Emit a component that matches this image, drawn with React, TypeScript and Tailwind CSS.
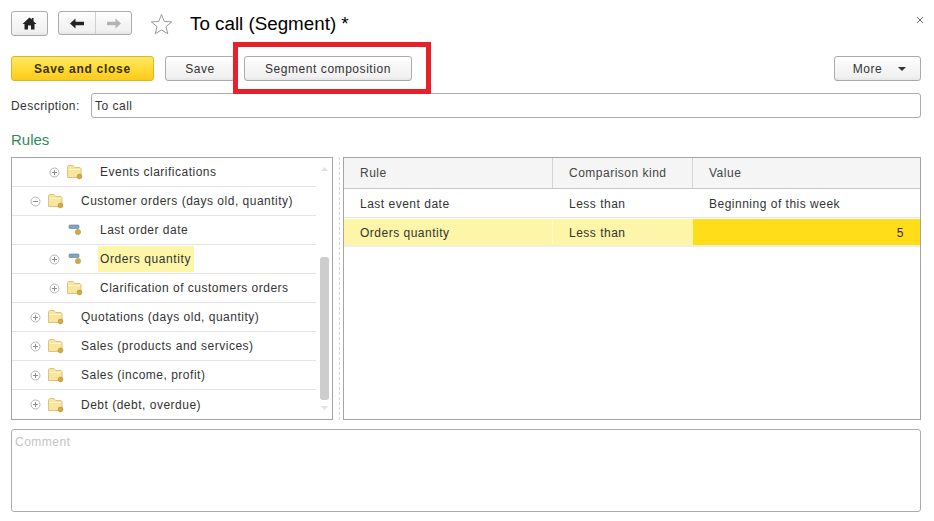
const Folder = () => (
    <svg width="16" height="16" viewBox="0 0 16 16" className="shrink-0">
        <path d="M0.5 13.5V2.5L1.5 1.5H6L7.5 3.5H13L14 4.5V13.5Z" fill="#f9e59c" stroke="#dcc47c" strokeWidth="1"/>
        <path d="M1.5 5.5H13" stroke="#fff6cf" strokeWidth="1"/>
        <circle cx="12.5" cy="12.5" r="2.4" fill="#d6aa48" stroke="#a98229" strokeWidth="0.5"/>
    </svg>
);

const Field = () => (
    <svg width="16" height="16" viewBox="0 0 16 16" className="shrink-0">
        <rect x="2" y="3" width="10" height="3.5" rx="1" fill="#7fa6bd" stroke="#5a7f96" strokeWidth="0.6"/>
        <circle cx="11" cy="10" r="2.6" fill="#d6aa48" stroke="#a98229" strokeWidth="0.5"/>
    </svg>
);

const Toggle = ({open}: {open?: boolean}) => (
    <svg width="11" height="11" viewBox="0 0 11 11" className="shrink-0">
        <circle cx="5.5" cy="5.5" r="4.5" fill="#fff" stroke="#b4b4b4" strokeWidth="1"/>
        <path d="M3 5.5H8" stroke="#8c8c8c" strokeWidth="1"/>
        {!open && <path d="M5.5 3V8" stroke="#8c8c8c" strokeWidth="1"/>}
    </svg>
);

const TreeRow = ({label, level, toggle, icon, selected, last}: {
    label: string;
    level: number;
    toggle?: "open" | "closed";
    icon: "folder" | "field";
    selected?: boolean;
    last?: boolean;
}) => (
    <div className={`flex items-center h-[29px] ${last ? "" : "border-b border-[#e4e4e4]"} ${level === 2 ? "pl-[37px]" : "pl-[18px]"}`}>
        <div className="w-[11px] flex justify-center">
            {toggle && <Toggle open={toggle === "open"}/>}
        </div>
        <div className="ml-[7px] w-[16px]">
            {icon === "folder" ? <Folder/> : <Field/>}
        </div>
        <div className={`ml-[15px] pl-[2px] pr-[3px] h-[26px] flex items-center ${selected ? "bg-[#fdf5a8] tracking-[0.6px]" : ""}`}>
            {label}
        </div>
    </div>
);

const Btn = ({children, className}: {children: React.ReactNode; className: string}) => (
    <div className={`h-[25px] flex items-center justify-center rounded-[3px] border border-[#ababab] bg-[linear-gradient(#ffffff_0%,#f6f6f6_45%,#f1f1f1_85%,#e6e6e6_100%)] ${className}`}>
        {children}
    </div>
);

const App = () => {
    return (
        <div className="relative w-[934px] h-[521px] bg-white overflow-hidden text-[12px] tracking-[0.5px] text-[#333] font-['Liberation_Sans',Arial,sans-serif]">
            {/* top bar */}
            <div className="flex items-center h-[24px] mt-[11px] ml-[11px]">
                <Btn className="w-[37px] h-[24px]">
                    <svg width="15" height="13" viewBox="0 0 15 13">
                        <path d="M7.5 0.5L0.5 7H2.5V12.5H6V8.5H9V12.5H12.5V7H14.5L11.5 4.2V1H9.8V2.6Z" fill="#222"/>
                    </svg>
                </Btn>
                <div className="ml-[10px] w-[74px] h-[24px] flex rounded-[3px] border border-[#ababab] bg-[linear-gradient(#ffffff_0%,#f6f6f6_45%,#f1f1f1_85%,#e6e6e6_100%)]">
                    <div className="w-[37px] flex items-center justify-center border-r border-[#cfcfcf]">
                        <svg width="14" height="11" viewBox="0 0 14 11">
                            <path d="M0 5.5L5.5 0.5V3.8H14V7.2H5.5V10.5Z" fill="#222"/>
                        </svg>
                    </div>
                    <div className="flex-1 flex items-center justify-center">
                        <svg width="14" height="11" viewBox="0 0 14 11">
                            <path d="M14 5.5L8.5 0.5V3.8H0V7.2H8.5V10.5Z" fill="#b3b3b3"/>
                        </svg>
                    </div>
                </div>
                <svg width="23" height="22" viewBox="0 0 23 22" className="ml-[18px] mt-[2px]">
                    <path d="M11.5 1.5L14.3 8.4L21.7 8.9L16 13.6L17.8 20.8L11.5 16.9L5.2 20.8L7 13.6L1.3 8.9L8.7 8.4Z" fill="#fff" stroke="#9a9a9a" strokeWidth="1"/>
                </svg>
                <div className="ml-[17px] text-[18.8px] tracking-normal text-black mt-[3px]">To call (Segment) *</div>
                <svg width="8" height="8" viewBox="0 0 8 8" className="ml-auto mr-[10px] mb-[6px]">
                    <path d="M1 1L7 7M7 1L1 7" stroke="#666" strokeWidth="1"/>
                </svg>
            </div>

            {/* command bar */}
            <div className="flex items-center mt-[21px] ml-[11px] mr-[13px]">
                <div className="w-[143px] h-[25px] pt-[1px] flex items-center justify-center rounded-[3px] border border-[#e0b520] bg-[linear-gradient(#ffe768_0%,#ffdc36_50%,#fbc91c_100%)] font-bold tracking-[0.72px] text-[#3a3000]">
                    Save and close
                </div>
                <Btn className="ml-[11px] w-[70px] pt-[1px]">Save</Btn>
                <Btn className="ml-[9px] w-[168px] pt-[1px] tracking-[0.55px]">Segment composition</Btn>
                <Btn className="ml-auto w-[87px] gap-[16px] pl-[4px] pt-[1px]">
                    <span>More</span>
                    <svg width="8" height="4" viewBox="0 0 8 4"><path d="M0 0H8L4 4Z" fill="#333"/></svg>
                </Btn>
            </div>

            {/* description */}
            <div className="flex items-center mt-[12px] ml-[11px] mr-[13px]">
                <div className="w-[80px] tracking-[0.45px]">Description:</div>
                <div className="flex-1 h-[25px] flex items-center pl-[3px] rounded-[3px] border border-[#ababab]">To call</div>
            </div>

            <div className="mt-[12px] ml-[11px] text-[15px] leading-[19px] tracking-normal text-[#2f8a5a]">Rules</div>

            {/* panels */}
            <div className="flex mt-[8px] ml-[11px] mr-[13px] h-[263px]">
                <div className="relative w-[322px] border border-[#a5a5a5] pr-[16px] overflow-hidden">
                    <TreeRow label="Events clarifications" level={2} toggle="closed" icon="folder"/>
                    <TreeRow label="Customer orders (days old, quantity)" level={1} toggle="open" icon="folder"/>
                    <TreeRow label="Last order date" level={2} icon="field"/>
                    <TreeRow label="Orders quantity" level={2} toggle="closed" icon="field" selected/>
                    <TreeRow label="Clarification of customers orders" level={2} toggle="closed" icon="folder"/>
                    <TreeRow label="Quotations (days old, quantity)" level={1} toggle="closed" icon="folder"/>
                    <TreeRow label="Sales (products and services)" level={1} toggle="closed" icon="folder"/>
                    <TreeRow label="Sales (income, profit)" level={1} toggle="closed" icon="folder"/>
                    <TreeRow label="Debt (debt, overdue)" level={1} toggle="closed" icon="folder" last/>
                    {/* scrollbar */}
                    <svg width="7" height="4" viewBox="0 0 7 4" className="absolute right-[4px] top-[9px]"><path d="M3.5 0L7 4H0Z" fill="#e2e2e2"/></svg>
                    <div className="absolute right-[3px] top-[99px] w-[9px] h-[143px] rounded-[3px] bg-[#cdcdcd]"/>
                    <svg width="7" height="4" viewBox="0 0 7 4" className="absolute right-[4px] bottom-[9px]"><path d="M0 0H7L3.5 4Z" fill="#e2e2e2"/></svg>
                </div>

                <div className="w-[10px] flex justify-center">
                    <div className="h-full ml-[2px] border-l border-dashed border-[#d8d8d8]"/>
                </div>

                <div className="flex-1 border border-[#a5a5a5]">
                    <div className="flex h-[31px] bg-[#f5f5f5] border-b border-[#c9c9c9] text-[#444]">
                        <div className="w-[209px] flex items-center pl-[16px] border-r border-[#d4d4d4]">Rule</div>
                        <div className="w-[140px] flex items-center pl-[16px] border-r border-[#d4d4d4]">Comparison kind</div>
                        <div className="flex-1 flex items-center pl-[16px]">Value</div>
                    </div>
                    <div className="flex h-[29px] pt-[1px] border-b border-[#e4e4e4]">
                        <div className="w-[209px] flex items-center pl-[16px]">Last event date</div>
                        <div className="w-[140px] flex items-center pl-[16px]">Less than</div>
                        <div className="flex-1 flex items-center pl-[16px]">Beginning of this week</div>
                    </div>
                    <div className="flex h-[29px] border-t border-b-2 border-t-white border-b-[#efefdc] bg-[#fdf5a8]">
                        <div className="w-[209px] flex items-center pl-[16px] pt-[2px] border-r border-[#fefad0]">Orders quantity</div>
                        <div className="w-[140px] flex items-center pl-[16px] pt-[2px]">Less than</div>
                        <div className="flex-1 flex items-center justify-end pr-[16px] pt-[2px] bg-[#ffdd18]">5</div>
                    </div>
                </div>
            </div>

            {/* comment */}
            <div className="mt-[9px] ml-[11px] mr-[13px] h-[83px] rounded-[3px] border border-[#ababab] pl-[3px] pt-[3px] text-[#c4c4c4]">
                Comment
            </div>

            {/* annotation frame */}
            <div className="absolute left-[233px] top-[42px] w-[198px] h-[52px] border-[5px] border-[#e8202a]"/>
        </div>
    );
};

export default App;
